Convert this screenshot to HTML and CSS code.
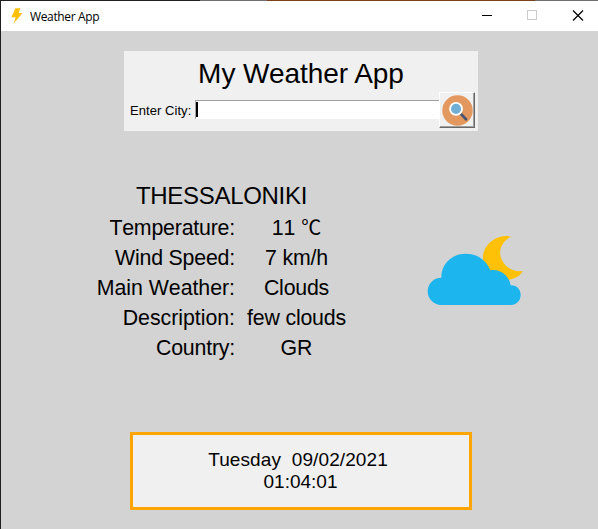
FILE: index.html
```html
<!DOCTYPE html>
<html lang="en">
<head>
<meta charset="utf-8">
<title>Weather App</title>
<link rel="stylesheet" href="styles.css">
</head>
<body>
<div class="window">
  <header class="titlebar">
    <svg class="bolt" viewBox="0 0 12 16"><path d="M4.4.3h5L7.6 5.1h3.9L2.8 15.4l1.8-6.2H.4z" fill="#ffc107"/></svg>
    <span class="caption">Weather App</span>
    <svg class="controls" viewBox="0 0 104 11" shape-rendering="crispEdges"><path d="M0 5.5h10" stroke="#000"/><rect x="45.5" y=".5" width="9" height="9" fill="none" stroke="#ccc"/><path d="M91 .5l10 10M101 .5l-10 10" stroke="#000" stroke-width="1.2" shape-rendering="auto"/></svg>
  </header>
  <main class="content">
    <section class="search">
      <h1>My Weather App</h1>
      <div class="search-row">
        <label>Enter City:</label>
        <div class="entry"><i class="caret"></i></div>
        <button class="go" type="button" aria-label="Search"><svg viewBox="0 0 32 32"><circle cx="16" cy="16" r="15.7" fill="#e2985e"/><path d="M20 20l4.8 5" stroke="#475571" stroke-width="2.8" stroke-linecap="round"/><circle cx="14.5" cy="14.3" r="6.2" fill="#70afd3" stroke="#fff" stroke-width="2"/></svg></button>
      </div>
    </section>
    <section class="report">
      <div class="details">
        <h2>THESSALONIKI</h2>
        <dl>
          <dt class="snug">Temperature:</dt><dd>11 <span class="unit">℃</span></dd>
          <dt class="snug">Wind Speed:</dt><dd class="snug">7 km/h</dd>
          <dt>Main Weather:</dt><dd class="snug">Clouds</dd>
          <dt>Description:</dt><dd class="snug">few clouds</dd>
          <dt class="snug">Country:</dt><dd>GR</dd>
        </dl>
      </div>
      <svg class="weather" viewBox="0 0 330 270"><path d="M274 35C240 27 202 47 191 82C184 107 194 139 216 153C235 168 265 168 282 160C295 155 304 147 309 138C287 142 264 132 251 114C230 86 242 49 274 35Z" fill="#ffc107"/><path d="M64 240C40 240 23 221 23 199C23 176 41 158 64 158C63 117 96 86 137 86C169 86 199 104 211 136C240 131 267 151 272 181C289 180 302 193 302 210C302 227 289 240 273 240Z" fill="#1cb5ee"/></svg>
    </section>
    <section class="clock"><div class="date">Tuesday&nbsp; 09/02/2021</div><div class="time">01:04:01</div></section>
  </main>
</div>
</body>
</html>
```
FILE: styles.css
```css
* { box-sizing: border-box; }
body { margin: 0; background: #d3d3d3; color: #000; font-family: "Liberation Sans", Arial, sans-serif; overflow: hidden; }
.window { height: 529px; border-left: 1px solid #221f20; background: linear-gradient(90deg, #221f20 199px, #707070 199px 266px, #78401b 266px 534px, #707070 534px) 0 0 / 100% 1px no-repeat; padding-top: 1px; }
.titlebar { height: 30px; background: #fff; display: flex; align-items: center; padding: 0 15px 0 10px; }
.bolt { width: 12px; height: 16px; margin-top: -1px; }
.caption { font: 12px/16px "Open Sans", sans-serif; letter-spacing: -.35px; margin-left: 7px; margin-top: 1px; }
.controls { width: 104px; height: 11px; margin-left: auto; margin-right: -3px; margin-top: -1px; }
.content { height: 498px; padding-top: 20px; }
.search { width: 354px; height: 80px; margin-left: 123px; background: #f0f0f0; }
h1 { margin: 0; height: 41px; padding-top: 7px; font-size: 28px; line-height: 32px; font-weight: 400; text-align: center; letter-spacing: -.05px; }
.search-row { display: flex; align-items: flex-start; padding-left: 6px; }
label { width: 65px; font-size: 13px; line-height: 15px; padding-top: 11px; white-space: nowrap; letter-spacing: .06px; }
.entry { width: 244px; height: 19px; margin-top: 8px; background: #fff; border-top: 1px solid #a0a0a0; border-left: 1px solid #a0a0a0; padding: 1px 0; }
.caret { display: block; width: 2px; height: 15px; background: #000; }
.go { width: 36px; height: 36px; padding: 1px; border: 1px solid; border-color: #fff #696969 #696969 #fff; background: #f0f0f0; box-shadow: inset -1px -1px #a0a0a0; }
.go svg { display: block; width: 31px; height: 31px; margin: 1px; }
.report { display: flex; padding: 49px 0 0 89px; }
.details { width: 264px; }
h2 { margin: 0 0 1px; font-size: 24px; font-weight: 400; line-height: 32px; text-align: center; padding-right: 1px; letter-spacing: -.3px; }
dl { display: grid; grid-template-columns: 145px 123px; margin: 0; font-size: 21.33px; line-height: 30px; grid-auto-rows: 30px; font-kerning: none; }
dt { text-align: right; letter-spacing: -.03px; }
dd { margin: 0; text-align: center; }
.snug { letter-spacing: -.2px; }
.unit { font: 20px/20px "Noto Sans CJK JP", sans-serif; }
.weather { width: 110px; height: 90px; margin: 45px 0 0 66px; }
.clock { width: 342px; height: 78px; margin: 69px 0 0 129px; border: 3px solid #ffa500; background: #f0f0f0; padding-top: 14px; text-align: center; font-size: 19px; line-height: 22px; }
.date { padding-right: 6px; letter-spacing: .1px; }
.time { padding-right: 1px; }
```
